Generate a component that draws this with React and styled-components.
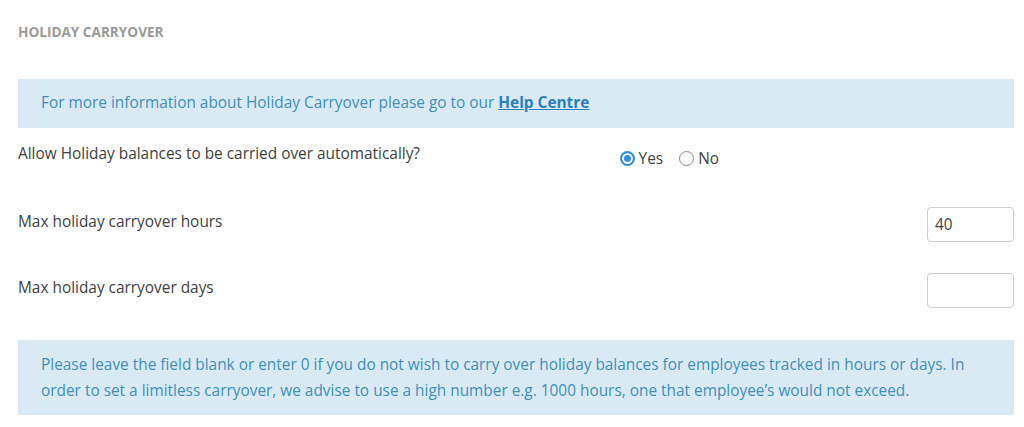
import React, { useState } from 'react';
import styled, { createGlobalStyle } from 'styled-components';

const GlobalStyle = createGlobalStyle`
  body {
    margin: 0;
    background: #fff;
    font-family: "Open Sans", "Noto Sans", Arial, sans-serif;
  }
`;

const Page = styled.div`
  padding: 0 10px 0 18px;
  width: 1024px;
  box-sizing: border-box;
`;

const Heading = styled.h3`
  margin: 0;
  padding-top: 22px;
  height: 79px;
  box-sizing: border-box;
  font-size: 13.6px;
  font-weight: 700;
  color: #9a9a9a;
`;

const InfoBox = styled.div`
  background: #daeaf5;
  color: #3e8fbd;
  font-size: 15.4px;
  line-height: 26px;
  padding: ${(p) => p.$pad};
  width: 996px;
  box-sizing: border-box;
`;

const HelpLink = styled.a`
  color: #2a7fc0;
  font-weight: 700;
  text-decoration: underline;
`;

const Row = styled.div`
  display: flex;
  align-items: center;
  height: ${(p) => p.$h}px;
  width: 996px;
`;

const Label = styled.div`
  flex: 1;
  font-size: 15.4px;
  color: #3f3f3f;
  align-self: flex-start;
  padding-top: ${(p) => p.$top}px;
`;

const RadioGroup = styled.div`
  display: flex;
  align-items: center;
  gap: 16px;
  margin-right: 295px;
  margin-top: -4px;
`;

const RadioLabel = styled.label`
  display: flex;
  align-items: center;
  gap: 4px;
  font-size: 15.4px;
  color: #3f3f3f;
  cursor: pointer;
`;

const RadioDot = styled.span`
  width: 15px;
  height: 15px;
  border-radius: 50%;
  box-sizing: border-box;
  border: ${(p) => (p.$on ? '2px solid #3290dc' : '1px solid #8a8a8a')};
  background: ${(p) => (p.$on ? '#3290dc' : '#fff')};
  box-shadow: ${(p) => (p.$on ? 'inset 0 0 0 2px #fff' : 'none')};
`;

const Input = styled.input`
  width: 87px;
  height: 35px;
  box-sizing: border-box;
  border: 1px solid #cfcfcf;
  border-radius: 4px;
  padding: 0 7px;
  font-family: inherit;
  font-size: 15.4px;
  color: #444;
  outline: none;
  align-self: flex-start;
  margin-top: ${(p) => p.$top}px;
`;

const App = () => {
  const [carry, setCarry] = useState('yes');
  const [hours, setHours] = useState('40');
  const [days, setDays] = useState('');

  return (
    <Page>
      <GlobalStyle />
      <Heading>HOLIDAY CARRYOVER</Heading>
      <InfoBox $pad="11px 23px 12px 23px">
        For more information about Holiday Carryover please go to our{' '}
        <HelpLink href="#">Help Centre</HelpLink>
      </InfoBox>
      <Row $h={65}>
        <Label $top={15}>Allow Holiday balances to be carried over automatically?</Label>
        <RadioGroup>
          <RadioLabel onClick={() => setCarry('yes')}>
            <RadioDot $on={carry === 'yes'} />
            Yes
          </RadioLabel>
          <RadioLabel onClick={() => setCarry('no')}>
            <RadioDot $on={carry === 'no'} />
            No
          </RadioLabel>
        </RadioGroup>
      </Row>
      <Row $h={65}>
        <Label $top={18}>Max holiday carryover hours</Label>
        <Input $top={14} value={hours} onChange={(e) => setHours(e.target.value)} />
      </Row>
      <Row $h={82}>
        <Label $top={19}>Max holiday carryover days</Label>
        <Input $top={15} value={days} onChange={(e) => setDays(e.target.value)} />
      </Row>
      <InfoBox $pad="12px 23px 11px 23px">
        Please leave the field blank or enter 0 if you do not wish to carry over holiday balances for
        employees tracked in hours or days. In order to set a limitless carryover, we advise to use a
        high number e.g. 1000 hours, one that employee’s would not exceed.
      </InfoBox>
    </Page>
  );
};

export default App;
